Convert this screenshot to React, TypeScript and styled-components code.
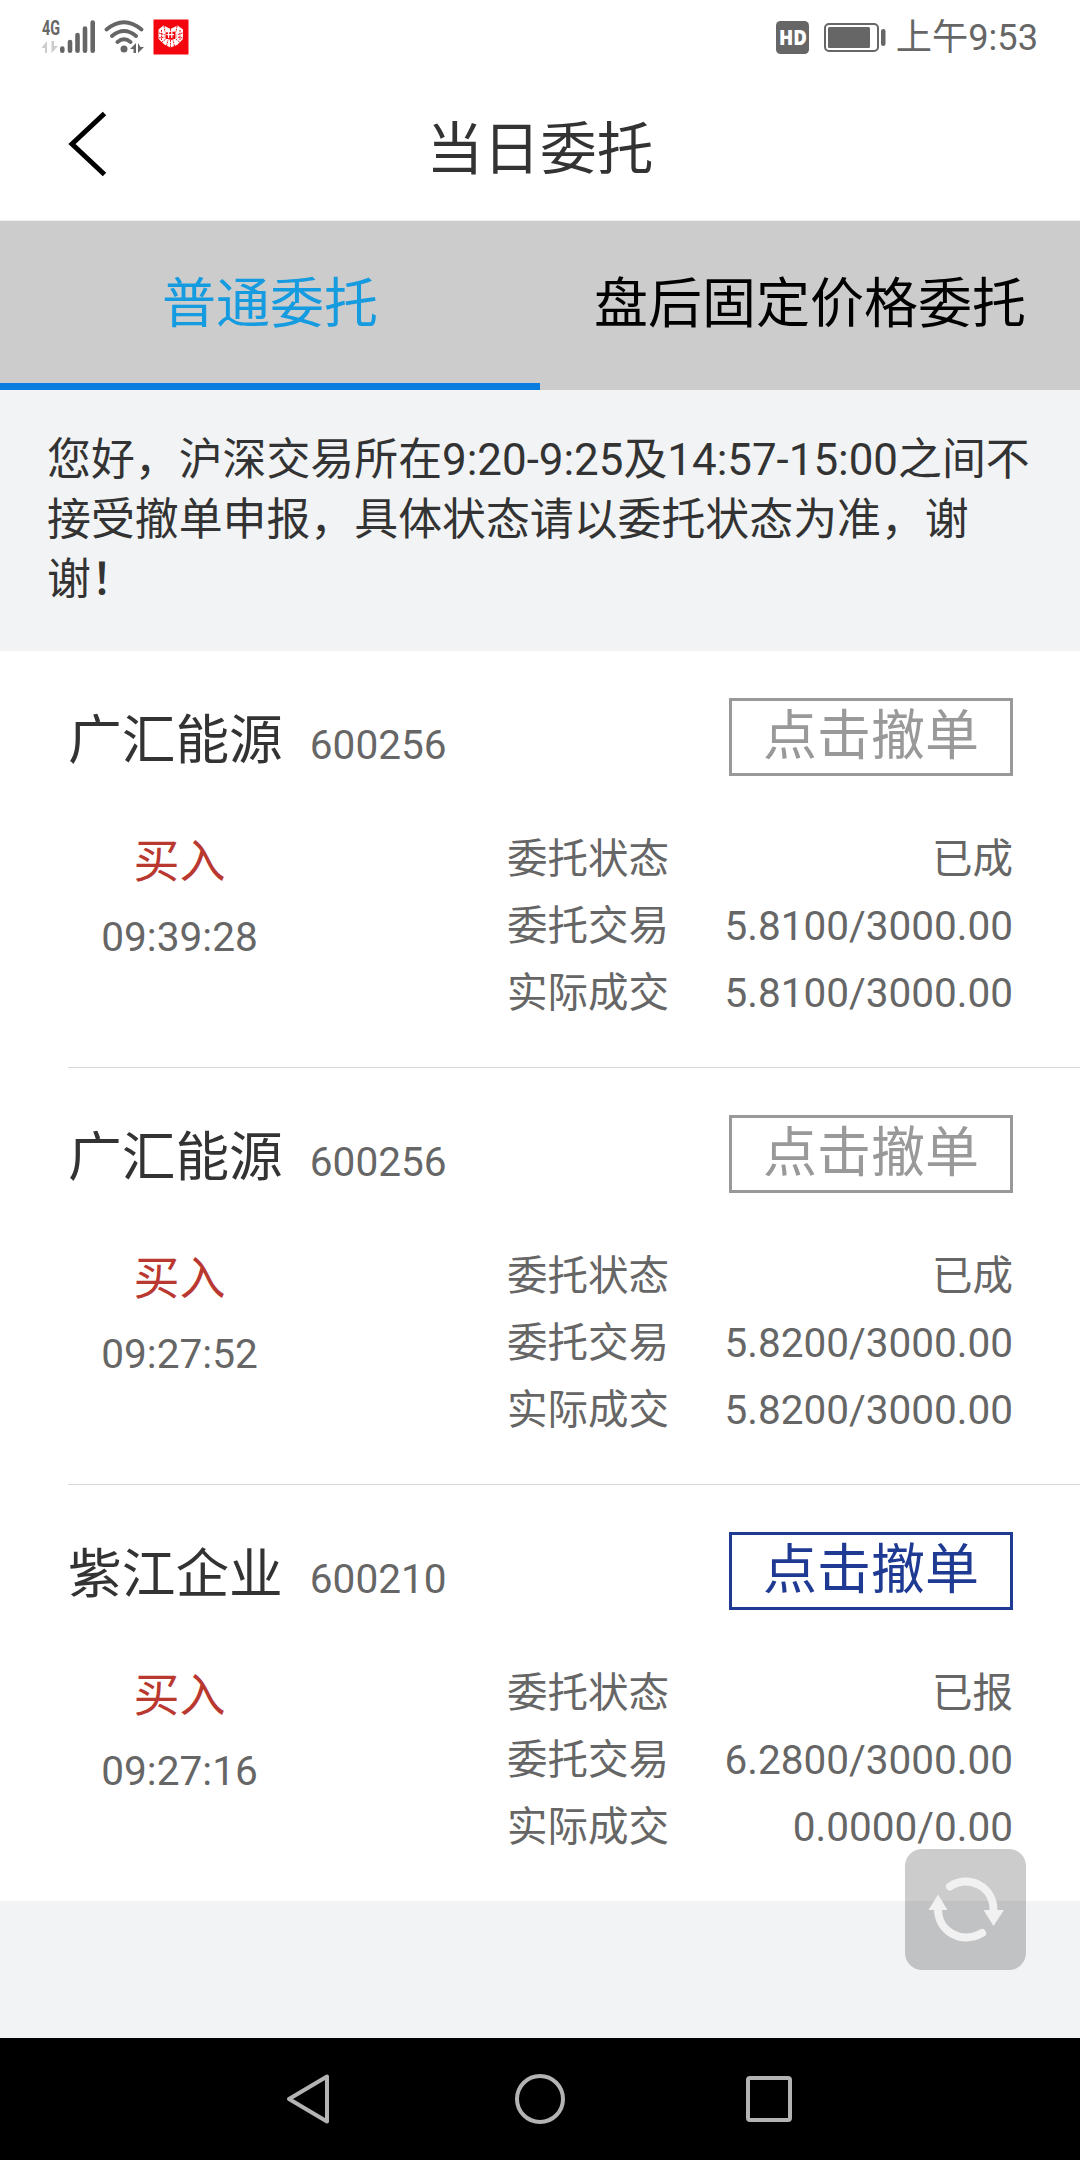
import React from "react";
import styled, { createGlobalStyle } from "styled-components";

const GlobalStyle = createGlobalStyle`
  * { box-sizing: border-box; }
  body {
    margin: 0;
    background: #f2f3f5;
    font-family: Roboto, "Noto Sans CJK SC", sans-serif;
  }
  button { font-family: inherit; background: none; border: 0; margin: 0; padding: 0; }
`;

const Screen = styled.div`
  position: relative;
  width: 1080px;
  height: 2160px;
  display: flex;
  flex-direction: column;
  background: #f2f3f5;
  overflow: hidden;
`;

const StatusBar = styled.div`
  height: 74px;
  flex: none;
  display: flex;
  align-items: center;
  justify-content: space-between;
  padding: 0 42px 0 40px;
  background: #fff;
  color: #666;
`;

const StatusGroup = styled.div`
  display: flex;
  align-items: center;
`;

const Clock = styled.span`
  font-size: 36.2px;
  line-height: 40px;
  margin-left: 10px;
  padding-top: 2px;
`;

const Header = styled.header`
  height: 147px;
  flex: none;
  display: grid;
  grid-template-columns: 120px 1fr 120px;
  align-items: center;
  background: #fff;
  border-bottom: 1px solid #eee;
`;

const BackButton = styled.button`
  display: flex;
  padding: 0 0 6px 66px;
`;

const Title = styled.h1`
  margin: 0;
  padding-top: 6px;
  text-align: center;
  font-size: 56.7px;
  line-height: 80px;
  font-weight: 400;
  color: #333;
`;

const Tabs = styled.nav`
  height: 169px;
  flex: none;
  display: grid;
  grid-template-columns: 1fr 1fr;
  background: #ccc;
`;

const Tab = styled.button<{ $active?: boolean }>`
  font-size: 54px;
  line-height: 80px;
  padding-top: ${(p) => (p.$active ? 5 : 0)}px;
  padding-bottom: ${(p) => (p.$active ? 0 : 2)}px;
  color: ${(p) => (p.$active ? "#149be0" : "#000")};
  border-bottom: ${(p) => (p.$active ? "7px solid #087cdf" : "0")};
`;

const Notice = styled.p`
  margin: 0;
  height: 261px;
  flex: none;
  padding: 40px 40px 0 47px;
  font-size: 43.9px;
  line-height: 60px;
  color: #333;
  b { font-weight: 500; }
`;

const OrderList = styled.main`
  height: 1250px;
  flex: none;
  display: grid;
  grid-template-rows: 417px 417px 416px;
  background: #fff;
  padding-left: 68px;
`;

const OrderCard = styled.article`
  padding: 47px 67px 0 0;
  &:not(:last-child) { border-bottom: 1px solid #d8d9da; }
`;

const OrderHead = styled.div`
  display: flex;
  height: 78px;
  align-items: center;
`;

const StockName = styled.span`
  font-size: 53.7px;
  line-height: 78px;
  padding-top: 7px;
  color: #333;
`;

const StockCode = styled.span`
  font-size: 40.6px;
  line-height: 60px;
  margin: 15px 0 0 27px;
  color: #666;
`;

const CancelButton = styled.button<{ $enabled: boolean }>`
  margin-left: auto;
  width: 284px;
  height: 78px;
  font-size: 54px;
  line-height: 66px;
  border: 3px solid currentColor;
  color: ${(p) => (p.$enabled ? "#1f3a93" : "#999")};
`;

const OrderBody = styled.div`
  display: grid;
  grid-template-columns: 223px 1fr;
  column-gap: 216px;
  padding-top: 50px;
`;

const Side = styled.div`
  display: flex;
  flex-direction: column;
  align-items: center;
  font-size: 40.6px;
  color: #666;
`;

const Direction = styled.span`
  font-size: 46px;
  line-height: 68px;
  padding-top: 1px;
  color: #b93830;
`;

const Time = styled.span`
  line-height: 60px;
  margin-top: 12px;
`;

const Details = styled.dl`
  margin: 0;
  color: #666;
  font-size: 40.5px;
  line-height: 67px;
`;

const DetailRow = styled.div`
  display: flex;
  justify-content: space-between;
  dt, dd { margin: 0; }
`;

const RefreshButton = styled.button`
  position: absolute;
  right: 54px;
  bottom: 190px;
  width: 121px;
  height: 121px;
  border-radius: 17px;
  background: rgba(0, 0, 0, 0.2);
`;

const SystemNav = styled.footer`
  margin-top: auto;
  height: 122px;
  flex: none;
  display: flex;
  justify-content: center;
  align-items: center;
  gap: 176px;
  background: #000;
`;

const Icon = styled.svg`
  display: block;
  flex: none;
`;

const SignalIcon = () => (
  <Icon width="56" height="60" viewBox="40 6 56 60">
    <text x="42" y="34" fontSize="20" fontWeight="700" fill="#666" textLength="18" lengthAdjust="spacingAndGlyphs">4G</text>
    <path d="M41.5 47l5.5-7v12h-2v-5zM51.500 40v12l6.500-7h-4v-5z" fill="#ccc" />
    <g stroke="#666" strokeWidth="4.600" strokeLinecap="round">
      <path d="M62.300 47.500V49.700M70 41V49.700M77.500 34V49.700M85 27.500V49.700M92.700 21.500V49.700" />
    </g>
  </Icon>
);

const WifiIcon = () => (
  <Icon width="42" height="38" viewBox="103 17 42 38" style={{ marginLeft: 7 }}>
    <g fill="none" stroke="#666" strokeWidth="3.800" strokeLinecap="round">
      <path d="M106.500 28.500Q124 14 141.500 28.500M112 35Q124 25 136 35M117.500 41Q124 35.500 130.500 41" />
    </g>
    <circle cx="124" cy="48" r="3.500" fill="#666" />
    <path d="M130 48l6-6v10h-2.500v-4zM138 42v10l6-6h-3.500z" fill="#666" />
  </Icon>
);

const HeartIcon = () => (
  <Icon width="36" height="36" viewBox="0 0 36 36" style={{ marginLeft: 8 }}>
    <path d="M.5.5h35v35H.5z" fill="#f3060d" />
    <path d="M17.500 28.500L12 26 5.500 20V10.500L10.500 6.500l7 3.500 7-3.500 5.500 4V20l-6 6z" fill="#fff" />
    <path
      d="M17.500 10v3M17.500 21v8M6 14l6 2M6 19l6-1M29.500 14l-6 2M29.500 19l-6-1M11 7l1 6M24 7l-1 6M9 23l5-4M26.500 23l-5-4M13.500 27l1.500-6M21.500 27l-1.500-6M8.500 11v10M27 11v10"
      fill="none"
      stroke="#f3060d"
      strokeWidth="1"
      strokeDasharray="1.800 1"
    />
    <path d="M12.500 13.500l10-1v7l-4 1.500-6-1.500z" fill="#f3060d" />
    <path d="M15 13v2h-1.500v1.200H15V19h1.200v-2.800h2V19h1.200v-2.800H21V15h-1.600v-2h-1.200v2h-2v-2z" fill="#fff" />
  </Icon>
);

const HdIcon = () => (
  <Icon width="33" height="33" viewBox="0 0 33 33">
    <rect width="33" height="33" rx="4.500" fill="#666" />
    <text x="3" y="24" fontSize="20.500" fontWeight="800" fontFamily="Open Sans" fill="#fff" textLength="28" lengthAdjust="spacingAndGlyphs">HD</text>
  </Icon>
);

const BatteryIcon = () => (
  <Icon width="62" height="29" viewBox="0 0 62 29" style={{ marginLeft: 15 }}>
    <rect x="1" y="1" width="53" height="27" rx="4" fill="none" stroke="#666" strokeWidth="2" />
    <rect x="4" y="4" width="42" height="21" rx="1.500" fill="#666" />
    <rect x="57" y="6" width="4.500" height="17" rx="2.200" fill="#666" />
  </Icon>
);

const BackIcon = () => (
  <Icon width="42" height="66" viewBox="66 111 42 66">
    <path d="M104.500 113.500L72 144l32.500 30.500" fill="none" stroke="#000" strokeWidth="5" />
  </Icon>
);

const RefreshIcon = () => (
  <Icon width="121" height="121" viewBox="0 0 121 121">
    <g fill="none" stroke="#f1f1f2" strokeWidth="8" strokeLinecap="round">
      <path d="M45 37.500C63 25 89 37 88.500 62" />
      <path d="M77 84C56 96 33 82 33 60" />
    </g>
    <path d="M78.500 61H99L88.500 77zM23.500 61h19L33 45.500z" fill="#f1f1f2" />
  </Icon>
);

interface Order {
  name: string;
  code: string;
  time: string;
  status: string;
  entrust: string;
  deal: string;
  cancellable: boolean;
}

const orders: Order[] = [
  { name: "广汇能源", code: "600256", time: "09:39:28", status: "已成", entrust: "5.8100/3000.00", deal: "5.8100/3000.00", cancellable: false },
  { name: "广汇能源", code: "600256", time: "09:27:52", status: "已成", entrust: "5.8200/3000.00", deal: "5.8200/3000.00", cancellable: false },
  { name: "紫江企业", code: "600210", time: "09:27:16", status: "已报", entrust: "6.2800/3000.00", deal: "0.0000/0.00", cancellable: true },
];

const OrderItem = ({ order }: { order: Order }) => (
  <OrderCard>
    <OrderHead>
      <StockName>{order.name}</StockName>
      <StockCode>{order.code}</StockCode>
      <CancelButton $enabled={order.cancellable}>点击撤单</CancelButton>
    </OrderHead>
    <OrderBody>
      <Side>
        <Direction>买入</Direction>
        <Time>{order.time}</Time>
      </Side>
      <Details>
        <DetailRow><dt>委托状态</dt><dd>{order.status}</dd></DetailRow>
        <DetailRow><dt>委托交易</dt><dd>{order.entrust}</dd></DetailRow>
        <DetailRow><dt>实际成交</dt><dd>{order.deal}</dd></DetailRow>
      </Details>
    </OrderBody>
  </OrderCard>
);

export default function App() {
  return (
    <Screen>
      <GlobalStyle />
      <StatusBar>
        <StatusGroup>
          <SignalIcon />
          <WifiIcon />
          <HeartIcon />
        </StatusGroup>
        <StatusGroup>
          <HdIcon />
          <BatteryIcon />
          <Clock>上午9:53</Clock>
        </StatusGroup>
      </StatusBar>
      <Header>
        <BackButton aria-label="返回"><BackIcon /></BackButton>
        <Title>当日委托</Title>
      </Header>
      <Tabs>
        <Tab $active>普通委托</Tab>
        <Tab>盘后固定价格委托</Tab>
      </Tabs>
      <Notice>
        您好，沪深交易所在9:20-9:25及14:57-15:00之间不<br />
        接受撤单申报，具体状态请以委托状态为准，谢<br />
        谢<b>！</b>
      </Notice>
      <OrderList>
        {orders.map((order) => <OrderItem key={order.time} order={order} />)}
      </OrderList>
      <RefreshButton aria-label="刷新"><RefreshIcon /></RefreshButton>
      <SystemNav>
        <Icon width="52" height="54" viewBox="0 0 52 54">
          <path d="M42 4.500V49.500L4 27z" fill="none" stroke="#b3b3b3" strokeWidth="4" strokeLinejoin="round" />
        </Icon>
        <Icon width="54" height="54" viewBox="0 0 54 54">
          <circle cx="27" cy="27" r="23" fill="none" stroke="#b3b3b3" strokeWidth="4" />
        </Icon>
        <Icon width="52" height="54" viewBox="0 0 52 54">
          <rect x="5" y="6" width="42" height="42" rx="2" fill="none" stroke="#b3b3b3" strokeWidth="4" />
        </Icon>
      </SystemNav>
    </Screen>
  );
}
